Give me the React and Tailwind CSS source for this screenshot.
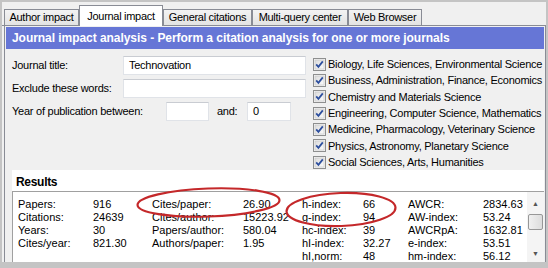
import React from "react";

const tabs = [
  { label: "Author impact", cls: "w-[75px] h-[16px] bg-gradient-to-b from-[#f3f3f3] to-[#e3e3e3]" },
  { label: "Journal impact", cls: "w-[84px] h-[21px] bg-white -mb-px z-10" },
  { label: "General citations", cls: "w-[89px] h-[16px] bg-gradient-to-b from-[#f3f3f3] to-[#e3e3e3]" },
  { label: "Multi-query center", cls: "w-[96px] h-[16px] bg-gradient-to-b from-[#f3f3f3] to-[#e3e3e3]" },
  { label: "Web Browser", cls: "w-[74px] h-[16px] bg-gradient-to-b from-[#f3f3f3] to-[#e3e3e3]" },
];

const subjects = [
  "Biology, Life Sciences, Environmental Science",
  "Business, Administration, Finance, Economics",
  "Chemistry and Materials Science",
  "Engineering, Computer Science, Mathematics",
  "Medicine, Pharmacology, Veterinary Science",
  "Physics, Astronomy, Planetary Science",
  "Social Sciences, Arts, Humanities",
];

const results = [
  ["Papers:", "916", "Cites/paper:", "26.90", "h-index:", "66", "AWCR:", "2834.63"],
  ["Citations:", "24639", "Cites/author:", "15223.92", "g-index:", "94", "AW-index:", "53.24"],
  ["Years:", "30", "Papers/author:", "580.04", "hc-index:", "39", "AWCRpA:", "1632.81"],
  ["Cites/year:", "821.30", "Authors/paper:", "1.95", "hI-index:", "32.27", "e-index:", "53.51"],
  ["", "", "", "", "hI,norm:", "48", "hm-index:", "56.12"],
];

const Checkbox = () => (
  <svg width="13" height="13" viewBox="0 0 13 13" className="shrink-0">
    <defs>
      <linearGradient id="cbg" x1="0" y1="0" x2="1" y2="1">
        <stop offset="0" stopColor="#dcdcdc" />
        <stop offset="1" stopColor="#fbfbfb" />
      </linearGradient>
    </defs>
    <rect x="0.5" y="0.5" width="12" height="12" fill="#f4f4f4" stroke="#8e8f8f" />
    <rect x="2" y="2" width="9" height="9" fill="url(#cbg)" stroke="#c4c4c4" strokeWidth="0.6" />
    <path d="M3.2 6.4 L5.4 8.8 L9.8 3.4" fill="none" stroke="#2d4f9e" strokeWidth="1.8" />
  </svg>
);

const Input = ({ className, value }) => (
  <div
    className={`h-[19px] bg-white border border-[#e0e3e8] border-t-[#c9ccd2] flex items-center pl-[5px] ${className}`}
  >
    {value}
  </div>
);

export default function App() {
  return (
    <div className="relative w-[548px] h-[268px] overflow-hidden bg-[#c4c4c4] pt-[2px] pl-[2px] pr-[2px] pb-[6px] font-['Liberation_Sans',Arial,sans-serif] text-black">
      <div className="h-full bg-[#f0f0f0] flex flex-col">
        {/* Tabs */}
        <div className="h-[24px] flex items-end pl-[2px] border-b border-[#898c95] shrink-0">
          {tabs.map((t) => (
            <div
              key={t.label}
              className={`relative flex items-center justify-center border border-b-0 border-[#898c95] text-[11px] tracking-[-0.3px] leading-none ${t.cls}`}
            >
              {t.label}
            </div>
          ))}
        </div>

        {/* Tab page */}
        <div className="flex-1 ml-[2px] border-l border-r border-[#898c95] p-[1px] pb-0 flex flex-col min-h-0">
          <div className="h-[22px] bg-[#6676d6] text-white font-bold text-[12px] tracking-[-0.05px] flex items-center pl-[6px] shrink-0 whitespace-nowrap">
            Journal impact analysis - Perform a citation analysis for one or more journals
          </div>

          {/* Form */}
          <div className="flex pt-[7px] pl-[6px] text-[11px] tracking-[-0.25px] shrink-0">
            <div className="w-[294px] flex flex-col gap-[4px]">
              <div className="flex items-center">
                <span className="w-[111px]">Journal title:</span>
                <Input className="w-[183px]" value="Technovation" />
              </div>
              <div className="flex items-center">
                <span className="w-[111px]">Exclude these words:</span>
                <Input className="w-[183px]" value="" />
              </div>
              <div className="flex items-center">
                <span className="w-[154px]">Year of publication between:</span>
                <Input className="w-[43px]" value="" />
                <span className="w-[38px] pl-[8px]">and:</span>
                <Input className="w-[44px]" value="0" />
              </div>
            </div>
            <div className="ml-[7px] flex flex-col">
              {subjects.map((s) => (
                <div key={s} className="h-[16.33px] flex items-center gap-[2px] whitespace-nowrap">
                  <Checkbox />
                  <span>{s}</span>
                </div>
              ))}
            </div>
          </div>

          {/* Results */}
          <div className="ml-[6px] h-[21px] bg-white pl-[4px] pt-[5px] text-[12px] font-bold leading-[14px] tracking-[-0.3px] shrink-0">
            Results
          </div>
          <div className="ml-[6px] flex-1 flex bg-white border-t border-l border-[#a0a0a0] min-h-0">
            <div className="flex-1 pl-[5px] pt-[6px] text-[11px]">
              {results.map((r, i) => (
                <div
                  key={i}
                  className="grid grid-cols-[75px_59px_91px_59px_61px_45px_75px_1fr] h-[13px] leading-[13px] whitespace-nowrap"
                >
                  {r.map((c, j) => (
                    <span key={j}>{c}</span>
                  ))}
                </div>
              ))}
            </div>
            <div className="w-[17px] bg-[#f4f4f4] flex flex-col items-center text-[#555]">
              <div className="h-[20px] flex items-center justify-center text-[7px] pt-[4px]">▲</div>
              <div className="mt-[2px] w-[15px] h-[16px] rounded-[2px] border border-[#979797] bg-gradient-to-r from-[#f0f0f0] to-[#dcdcdc]"></div>
              <div className="flex-1"></div>
              <div className="h-[16px] flex items-center justify-center text-[7px]">▼</div>
            </div>
          </div>
        </div>
      </div>

      {/* Annotation ellipses */}
      <svg className="absolute inset-0 pointer-events-none" width="548" height="268">
        <ellipse cx="208.5" cy="202.5" rx="71" ry="14" fill="none" stroke="#c4282a" strokeWidth="2.2" transform="rotate(-2 208.5 202.5)" />
        <ellipse cx="341" cy="209.5" rx="54.5" ry="16.5" fill="none" stroke="#c4282a" strokeWidth="2.2" transform="rotate(-2 341 209.5)" />
      </svg>
    </div>
  );
}
